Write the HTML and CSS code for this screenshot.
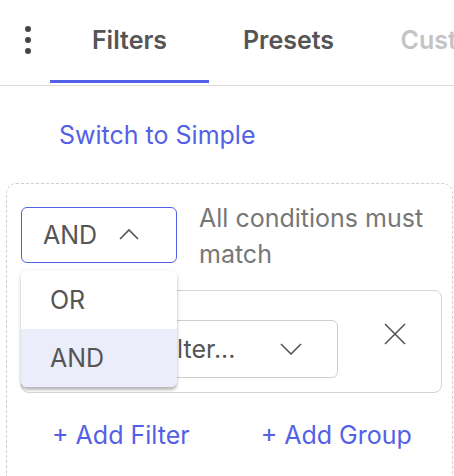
FILE: index.html
```html
<!DOCTYPE html>
<html>
<head>
<meta charset="utf-8">
<link rel="stylesheet" href="styles.css">
</head>
<body>
<div class="tabs">
  <div class="kebab"><span></span><span></span><span></span></div>
  <div class="tab active">Filters</div>
  <div class="tab">Presets</div>
  <div class="tab disabled">Custom</div>
</div>
<div class="content">
  <a class="switch">Switch to Simple</a>
  <div class="group">
    <div class="group-head">
      <div class="logic-wrap">
        <div class="logic-select">
          <span>AND</span>
          <svg class="chev" width="20" height="12" viewBox="0 0 20 12"><path d="M1 11 L10 2 L19 11" fill="none" stroke="#555" stroke-width="1.6"/></svg>
        </div>
        <div class="menu">
          <div class="menu-item">OR</div>
          <div class="menu-item selected">AND</div>
        </div>
      </div>
      <div class="desc">All conditions must match</div>
    </div>
    <div class="rule">
      <div class="field-select">
        <span>Select a filter...</span>
        <svg class="chev" width="22" height="12" viewBox="0 0 22 12"><path d="M1 1 L11 11 L21 1" fill="none" stroke="#555" stroke-width="1.6"/></svg>
      </div>
      <button class="remove">
        <svg width="22" height="22" viewBox="0 0 22 22"><path d="M1 1 L21 21 M21 1 L1 21" fill="none" stroke="#555" stroke-width="1.6"/></svg>
      </button>
    </div>
    <div class="actions">
      <a class="add">+ Add Filter</a>
      <a class="add">+ Add Group</a>
    </div>
  </div>
</div>
</body>
</html>
```
FILE: styles.css
```css
* { box-sizing: border-box; }
html, body { margin: 0; padding: 0; background: #fff; overflow: hidden; }
body { font-family: Inter, "Noto Sans", sans-serif; color: #555; width: 454px; height: 476px; }

.tabs {
  display: flex;
  height: 86px;
  border-bottom: 1px solid #dcdcdc;
  white-space: nowrap;
  overflow: hidden;
}
.kebab {
  width: 50px;
  flex: none;
  display: flex;
  flex-direction: column;
  align-items: flex-start;
  padding: 26px 0 0 25px;
  gap: 5px;
}
.kebab span { width: 6px; height: 6px; border-radius: 50%; background: #444; }
.tab {
  flex: none;
  width: 159px;
  height: 83px;
  text-align: center;
  font-size: 25px;
  font-weight: 600;
  line-height: 30px;
  color: #555;
  padding-top: 25px;
  border-bottom: 3px solid transparent;
}
.tab.active { border-bottom-color: #5361e6; }
.tab.disabled { color: #c4c4c4; }

.content { padding: 34px 0 0 6px; }
.switch {
  display: block;
  margin-left: 53px;
  font-size: 25px;
  color: #5361e6;
  line-height: 30px;
}
.group {
  margin-top: 33px;
  width: 447px;
  height: 320px;
  border: 1px dashed #cfcfcf;
  border-radius: 10px;
  padding: 23px 10px 0 14px;
}
.group-head { display: flex; gap: 22px; align-items: flex-start; }
.logic-wrap { position: relative; flex: none; }
.logic-select {
  width: 156px;
  height: 56px;
  border: 1px solid #5361e6;
  border-radius: 6px;
  display: flex;
  align-items: center;
  padding-left: 21px;
  gap: 22px;
  font-size: 25px;
  color: #555;
}
.logic-select .chev { margin-top: -2px; }
.menu {
  position: absolute;
  left: 0;
  top: 64px;
  width: 156px;
  background: #fff;
  border-radius: 6px;
  box-shadow: 0 3px 3px rgba(0,0,0,0.25), 0 0 6px rgba(0,0,0,0.08);
  overflow: hidden;
  z-index: 5;
}
.menu-item {
  height: 58px;
  display: flex;
  align-items: center;
  padding-left: 29px;
  font-size: 25px;
  color: #555;
}
.menu-item.selected { background: #ebedfa; }
.desc {
  width: 240px;
  font-size: 25px;
  line-height: 36px;
  color: #777;
  margin-top: -7px;
}
.rule {
  margin-top: 18px;
  width: 421px;
  height: 103px;
  border: 1px solid #d4d4d4;
  border-radius: 8px;
  padding: 29px 0 0 15px;
  display: flex;
  align-items: flex-start;
}
.field-select {
  width: 301px;
  height: 58px;
  border: 1px solid #cfcfcf;
  border-radius: 6px;
  display: flex;
  align-items: center;
  justify-content: space-between;
  padding: 0 35px 0 22px;
  font-size: 25px;
  color: #555;
  white-space: nowrap;
}
.remove {
  margin: 3px 0 0 46px;
  background: none;
  border: 0;
  padding: 0;
  width: 22px;
  height: 22px;
  display: block;
}
.actions {
  display: flex;
  gap: 71px;
  padding: 27px 0 0 31px;
}
.add { font-size: 25px; color: #5361e6; line-height: 30px; }
```
